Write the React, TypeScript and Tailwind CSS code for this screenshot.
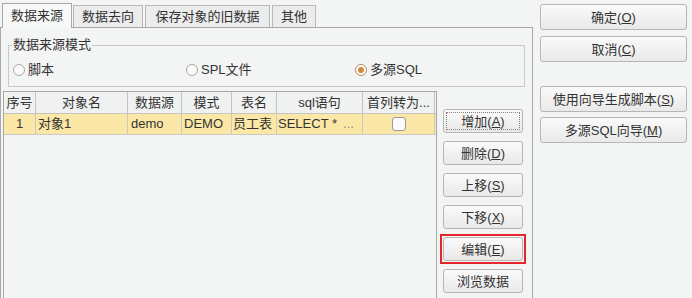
import type { ReactNode } from 'react';

// 表格列定义
const columns = [
    { title: '序号', width: 'w-[32px]' },
    { title: '对象名', width: 'w-[92px]' },
    { title: '数据源', width: 'w-[54px]' },
    { title: '模式', width: 'w-[50px]' },
    { title: '表名', width: 'w-[45px]' },
    { title: 'sql语句', width: 'w-[86px]' },
    { title: '首列转为...', width: 'w-[72px]' },
];

const tabs = [
    { label: '数据来源', width: 'w-[70px]', active: true },
    { label: '数据去向', width: 'w-[70px]', active: false },
    { label: '保存对象的旧数据', width: 'w-[125px]', active: false },
    { label: '其他', width: 'w-[44px]', active: false },
];

function Btn({ children, className = '', focused = false }: { children: ReactNode; className?: string; focused?: boolean }) {
    return (
        <button
            type="button"
            className={`relative flex items-center justify-center rounded-[3px] border border-[#b6b6b6] bg-linear-to-b from-[#fafafa] to-[#e9e9e9] text-[13px] leading-none text-[#333] ${className}`}
        >
            {focused && <span className="absolute inset-[2px] border border-dotted border-[#808080]" />}
            {children}
        </button>
    );
}

function Radio({ label, checked = false }: { label: string; checked?: boolean }) {
    return (
        <label className="flex items-center gap-[3px]">
            <span
                className={`flex h-[12px] w-[12px] items-center justify-center rounded-full border ${
                    checked ? 'border-[#b98a5c] bg-white' : 'border-[#a8a8a8] bg-[#fafafa]'
                }`}
            >
                {checked && <span className="h-[6px] w-[6px] rounded-full bg-[#d28a40]" />}
            </span>
            <span>{label}</span>
        </label>
    );
}

export default function App() {
    return (
        <div className="flex h-[298px] w-[692px] overflow-hidden bg-[#f3f4f4] font-['Liberation_Sans','Noto_Sans_CJK_SC',sans-serif] text-[13px] leading-[16px] text-[#333]">
            {/* 左侧选项卡 */}
            <div className="flex w-[533px] flex-col">
                <div className="flex h-[27px] items-end gap-[2px] pl-[2px]">
                    {tabs.map((t) =>
                        t.active ? (
                            <div
                                key={t.label}
                                className={`relative z-10 -mb-px mr-[-1px] flex h-[25px] ${t.width} items-center justify-center border-x border-t border-[#a9a9a9] bg-[#f7f8f8]`}
                            >
                                {t.label}
                            </div>
                        ) : (
                            <div
                                key={t.label}
                                className={`flex h-[22px] ${t.width} items-center justify-center border-x border-t border-[#b9b9b9] bg-[#ececec]`}
                            >
                                {t.label}
                            </div>
                        )
                    )}
                </div>

                <div className="flex flex-1 flex-col border-x border-t border-[#a9a9a9] bg-[#f3f4f4]">
                    <fieldset className="ml-[7px] mt-[9px] h-[50px] w-[517px] border border-[#c9c9c9]">
                        <legend className="ml-[3px] px-[1px] leading-[16px]">数据来源模式</legend>
                        <div className="flex h-[33px] items-center pl-[4px]">
                            <div className="w-[173px]">
                                <Radio label="脚本" />
                            </div>
                            <div className="w-[169px]">
                                <Radio label="SPL文件" />
                            </div>
                            <Radio label="多源SQL" checked />
                        </div>
                    </fieldset>

                    <div className="mt-[4px] flex flex-1">
                        {/* 表格 */}
                        <div className="ml-[2px] w-[434px] border-x border-t border-[#a8a8a8]">
                            <div className="flex h-[22px] border-b border-[#c4c4c4] bg-[#f0f1f1]">
                                {columns.map((c) => (
                                    <div
                                        key={c.title}
                                        className={`${c.width} flex items-center justify-center overflow-hidden whitespace-nowrap border-r border-[#c4c4c4]`}
                                    >
                                        {c.title}
                                    </div>
                                ))}
                            </div>
                            <div className="flex h-[21px] border-b border-[#c9c9c9] bg-[#fbe7a6]">
                                <div className="flex w-[32px] items-center justify-center border-r border-[#c9c9c9]">1</div>
                                <div className="flex w-[92px] items-center border-r border-[#c9c9c9] pl-[2px]">对象1</div>
                                <div className="flex w-[54px] items-center border-r border-[#c9c9c9] pl-[3px]">demo</div>
                                <div className="flex w-[50px] items-center border-r border-[#c9c9c9] pl-[2px]">DEMO</div>
                                <div className="flex w-[45px] items-center border-r border-[#c9c9c9] pl-[1px]">员工表</div>
                                <div className="flex w-[86px] items-center gap-[6px] overflow-hidden whitespace-nowrap border-r border-[#c9c9c9] pl-[1px]">
                                    <span>SELECT *</span>
                                    <span className="text-[#888]">...</span>
                                </div>
                                <div className="flex w-[72px] items-center justify-center border-r border-[#c9c9c9]">
                                    <span className="h-[14px] w-[14px] rounded-[3px] border border-[#9a9a9a] bg-[#fafafa]" />
                                </div>
                            </div>
                        </div>

                        {/* 操作按钮 */}
                        <div className="ml-[6px] flex w-[80px] flex-col gap-[8px] pt-[18px]">
                            <Btn className="h-[24px]" focused>
                                <span>增加(<u>A</u>)</span>
                            </Btn>
                            <Btn className="h-[24px]">
                                <span>删除(<u>D</u>)</span>
                            </Btn>
                            <Btn className="h-[24px]">
                                <span>上移(<u>S</u>)</span>
                            </Btn>
                            <Btn className="h-[24px]">
                                <span>下移(<u>X</u>)</span>
                            </Btn>
                            <div className="relative">
                                <span className="absolute -inset-[3px] border-2 border-[#e3262c]" />
                                <Btn className="h-[24px] w-full">
                                    <span>编辑(<u>E</u>)</span>
                                </Btn>
                            </div>
                            <Btn className="h-[24px]">
                                <span>浏览数据</span>
                            </Btn>
                        </div>
                    </div>
                </div>
            </div>

            {/* 右侧按钮 */}
            <div className="ml-[7px] flex w-[147px] flex-col pt-[4px]">
                <Btn className="h-[26px]">
                    <span>确定(<u>O</u>)</span>
                </Btn>
                <Btn className="mt-[6px] h-[26px]">
                    <span>取消(<u>C</u>)</span>
                </Btn>
                <Btn className="mt-[24px] h-[26px]">
                    <span>使用向导生成脚本(<u>S</u>)</span>
                </Btn>
                <Btn className="mt-[5px] h-[26px]">
                    <span>多源SQL向导(<u>M</u>)</span>
                </Btn>
            </div>
        </div>
    );
}
